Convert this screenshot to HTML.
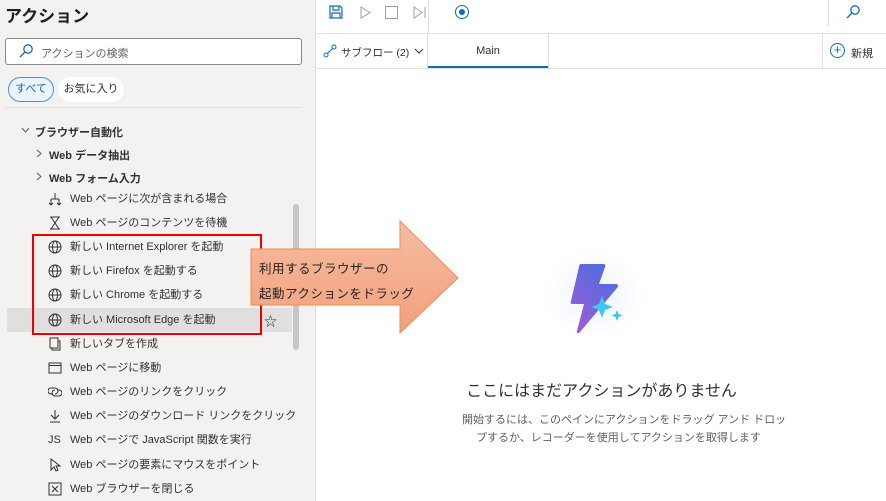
<!DOCTYPE html>
<html><head><meta charset="utf-8"><style>
*{margin:0;padding:0;box-sizing:border-box}
body{width:886px;height:501px;overflow:hidden;background:#fff;font-family:"Liberation Sans","Noto Sans CJK JP",sans-serif;color:#323130;position:relative}
.left{position:absolute;left:0;top:0;width:316px;height:501px;background:#f3f2f1;border-right:1px solid #e1dfdd}
.abs{position:absolute}
.item{position:absolute;left:48px;font-size:11px;height:20px;line-height:20px;white-space:nowrap;color:#323130}
.item .ic{position:absolute;left:0;top:3px;width:14px;height:14px}
.item span{position:absolute;left:22px}
</style></head><body>
<div class="left">
<div class="abs" style="left:5px;top:2px;font-size:17px;font-weight:bold;color:#201f1e">アクション</div>
<div class="abs" style="left:5px;top:38px;width:297px;height:27px;background:#fff;border:1px solid #8a8886;border-radius:3px"></div>
<svg class="abs" style="left:18px;top:43px" width="16" height="16" viewBox="0 0 16 16"><circle cx="10" cy="6" r="4.2" fill="none" stroke="#0f6cbd" stroke-width="1.3"/><path d="M7 9L2 14" stroke="#0f6cbd" stroke-width="1.3"/></svg>
<div class="abs" style="left:41px;top:45px;font-size:11px;color:#605e5c">アクションの検索</div>
<div class="abs" style="left:8px;top:77px;width:46px;height:25px;border:1px solid #4f8ee0;background:#ebf3fc;border-radius:13px;font-size:11px;color:#0f6cbd;text-align:center;line-height:23px">すべて</div>
<div class="abs" style="left:58px;top:77px;width:66px;height:25px;background:#fff;border-radius:13px;font-size:11px;text-align:center;line-height:25px">お気に入り</div>
<div class="abs" style="left:5px;top:107px;width:297px;height:1px;background:#e1dfdd"></div>
<svg class="abs" style="left:21px;top:127px" width="9" height="6" viewBox="0 0 9 6"><path d="M1 1l3.5 4L8 1" stroke="#605e5c" fill="none"/></svg>
<div class="abs" style="left:35px;top:124px;font-size:11px;font-weight:bold">ブラウザー自動化</div>
<svg class="abs" style="left:36px;top:149px" width="6" height="9" viewBox="0 0 6 9"><path d="M1 1l4 3.5L1 8" stroke="#605e5c" fill="none"/></svg>
<div class="abs" style="left:49px;top:147px;font-size:11px;font-weight:bold">Web データ抽出</div>
<svg class="abs" style="left:36px;top:172px" width="6" height="9" viewBox="0 0 6 9"><path d="M1 1l4 3.5L1 8" stroke="#605e5c" fill="none"/></svg>
<div class="abs" style="left:49px;top:170px;font-size:11px;font-weight:bold">Web フォーム入力</div>
<div class="abs" style="left:293px;top:204px;width:6px;height:146px;background:#c8c6c4;border-radius:3px"></div>
<div class="abs" style="left:7px;top:308px;width:285px;height:24px;background:#e1dfdd"></div>
<div class="abs" style="left:264px;top:311px;font-size:13px">☆</div>

<div class="item" style="top:189px"><svg class="ic" viewBox="0 0 14 14"><path d="M7 1v6M3 7h8M3 7v6M11 7v6M1 11l2 2 2-2M9 11l2 2 2-2" stroke="#323130" fill="none"/></svg><span>Web ページに次が含まれる場合</span></div>
<div class="item" style="top:213px"><svg class="ic" viewBox="0 0 14 14"><path d="M2 1h10M2 13h10M3 1l8 12M11 1L3 13" stroke="#323130" fill="none"/></svg><span>Web ページのコンテンツを待機</span></div>
<div class="item" style="top:237px"><svg class="ic" viewBox="0 0 14 14"><g stroke="#323130" fill="none"><circle cx="7" cy="7" r="6"/><ellipse cx="7" cy="7" rx="2.5" ry="6"/><path d="M1 7h12"/></g></svg><span>新しい Internet Explorer を起動</span></div>
<div class="item" style="top:261px"><svg class="ic" viewBox="0 0 14 14"><g stroke="#323130" fill="none"><circle cx="7" cy="7" r="6"/><ellipse cx="7" cy="7" rx="2.5" ry="6"/><path d="M1 7h12"/></g></svg><span>新しい Firefox を起動する</span></div>
<div class="item" style="top:285px"><svg class="ic" viewBox="0 0 14 14"><g stroke="#323130" fill="none"><circle cx="7" cy="7" r="6"/><ellipse cx="7" cy="7" rx="2.5" ry="6"/><path d="M1 7h12"/></g></svg><span>新しい Chrome を起動する</span></div>
<div class="item" style="top:310px"><svg class="ic" viewBox="0 0 14 14"><g stroke="#323130" fill="none"><circle cx="7" cy="7" r="6"/><ellipse cx="7" cy="7" rx="2.5" ry="6"/><path d="M1 7h12"/></g></svg><span>新しい Microsoft Edge を起動</span></div>
<div class="item" style="top:334px"><svg class="ic" viewBox="0 0 14 14"><path d="M2 1h8v10H2zM10 4h2v9H4v-2" stroke="#323130" fill="none"/></svg><span>新しいタブを作成</span></div>
<div class="item" style="top:358px"><svg class="ic" viewBox="0 0 14 14"><path d="M1 2h12v10H1zM1 4.5h12" stroke="#323130" fill="none"/></svg><span>Web ページに移動</span></div>
<div class="item" style="top:382px"><svg class="ic" viewBox="0 0 14 14"><path d="M5 9H3a3 3 0 010-6h4a3 3 0 010 6M9 5h2a3 3 0 010 6H7a3 3 0 010-6" stroke="#323130" fill="none"/></svg><span>Web ページのリンクをクリック</span></div>
<div class="item" style="top:406px"><svg class="ic" viewBox="0 0 14 14"><path d="M7 1v9M3 6l4 4 4-4M2 13h10" stroke="#323130" fill="none"/></svg><span>Web ページのダウンロード リンクをクリック</span></div>
<div class="item" style="top:430px"><span style="left:0">JS</span><span>Web ページで JavaScript 関数を実行</span></div>
<div class="item" style="top:455px"><svg class="ic" viewBox="0 0 14 14"><path d="M3 1v11l3-3 2 4 2-1-2-4h4z" stroke="#323130" fill="none"/></svg><span>Web ページの要素にマウスをポイント</span></div>
<div class="item" style="top:479px"><svg class="ic" viewBox="0 0 14 14"><path d="M1 1h12v12H1zM4 4l6 6M10 4l-6 6" stroke="#323130" fill="none"/></svg><span>Web ブラウザーを閉じる</span></div>
</div>
<div class="abs" style="left:32px;top:234px;width:230px;height:101px;border:2px solid #e00"></div>

<!-- toolbar -->
<svg class="abs" style="left:329px;top:5px" width="14" height="14" viewBox="0 0 14 14"><path d="M1 1h10l2 2v10H1zM4 1v4h6V1M3 13V8h8v5" stroke="#0f6cbd" fill="none" stroke-width="1.2"/></svg>
<svg class="abs" style="left:359px;top:6px" width="12" height="13" viewBox="0 0 12 13"><path d="M2 1l9 5.5L2 12z" stroke="#a19f9d" fill="none"/></svg>
<div class="abs" style="left:385px;top:6px;width:13px;height:13px;border:1px solid #a19f9d"></div>
<svg class="abs" style="left:413px;top:6px" width="14" height="13" viewBox="0 0 14 13"><path d="M1 1l8 5.5L1 12zM12 1v11" stroke="#a19f9d" fill="none"/></svg>
<div class="abs" style="left:428px;top:0;width:1px;height:33px;background:#e1dfdd"></div>
<div class="abs" style="left:455px;top:5px;width:14px;height:14px;border:1.5px solid #0f6cbd;border-radius:50%"></div>
<div class="abs" style="left:459px;top:9px;width:6px;height:6px;background:#0f6cbd;border-radius:50%"></div>
<div class="abs" style="left:828px;top:0;width:1px;height:26px;background:#e1dfdd"></div>
<svg class="abs" style="left:845px;top:4px" width="16" height="16" viewBox="0 0 16 16"><circle cx="10" cy="6" r="4.2" fill="none" stroke="#0f6cbd" stroke-width="1.3"/><path d="M7 9L2 14" stroke="#0f6cbd" stroke-width="1.3"/></svg>
<div class="abs" style="left:317px;top:33px;width:569px;height:1px;background:#e1dfdd"></div>
<div class="abs" style="left:317px;top:68px;width:569px;height:1px;background:#e1dfdd"></div>
<svg class="abs" style="left:323px;top:44px" width="14" height="14" viewBox="0 0 14 14"><circle cx="3" cy="11" r="2" stroke="#0f6cbd" fill="none"/><circle cx="11" cy="3" r="2" stroke="#0f6cbd" fill="none"/><path d="M4.5 9.5l5-5" stroke="#0f6cbd"/></svg>
<div class="abs" style="left:341px;top:45px;font-size:10.5px">サブフロー (2)</div>
<svg class="abs" style="left:414px;top:48px" width="10" height="6" viewBox="0 0 10 6"><path d="M1 1l4 4 4-4" stroke="#323130" fill="none"/></svg>
<div class="abs" style="left:427px;top:34px;width:1px;height:34px;background:#e1dfdd"></div>
<div class="abs" style="left:548px;top:34px;width:1px;height:34px;background:#e1dfdd"></div>
<div class="abs" style="left:428px;top:45px;width:120px;text-align:center;font-size:11px">Main</div>
<div class="abs" style="left:428px;top:66px;width:120px;height:2px;background:#0f6cbd"></div>
<div class="abs" style="left:822px;top:34px;width:1px;height:34px;background:#e1dfdd"></div>
<div class="abs" style="left:830px;top:43px;width:15px;height:15px;border:1.3px solid #0f6cbd;border-radius:50%;color:#0f6cbd;font-size:13px;line-height:12px;text-align:center">+</div>
<div class="abs" style="left:851px;top:45px;font-size:11px">新規</div>

<!-- arrow -->
<svg class="abs" style="left:248px;top:218px" width="214" height="118" viewBox="0 0 214 118"><defs><linearGradient id="g" x1="0" y1="0" x2="0" y2="1"><stop offset="0" stop-color="#f6bca0"/><stop offset="1" stop-color="#f2a07c"/></linearGradient></defs><path d="M3 31H152V3L210 60 152 115V87H3z" fill="url(#g)" stroke="#ed8a5a" stroke-width="1"/></svg>
<div class="abs" style="left:259px;top:258px;font-size:12.5px;color:#222;letter-spacing:.5px">利用するブラウザーの</div>
<div class="abs" style="left:259px;top:283px;font-size:12.5px;color:#222;letter-spacing:.5px">起動アクションをドラッグ</div>

<!-- illustration -->
<div class="abs" style="left:545px;top:250px;width:100px;height:90px;border-radius:50%;background:radial-gradient(#eef2fb,#fff 70%)"></div>
<svg class="abs" style="left:565px;top:262px" width="60" height="75" viewBox="0 0 60 75"><defs><linearGradient id="b" x1="0.8" y1="0" x2="0.2" y2="1"><stop offset="0" stop-color="#4a6ee0"/><stop offset="1" stop-color="#a05ad8"/></linearGradient></defs><path d="M16 2h22c2 0 3 1 2 3l-6 17h17c2 0 3 2 1 4L15 70c-2 2-4 1-3-1l7-27H8c-2 0-3-1-2-3l8-34c0-2 1-3 2-3z" fill="url(#b)"/><path d="M37 34l3 8 8 3-8 3-3 8-3-8-8-3 8-3z" fill="#3cc8f0"/><path d="M52 48l1.5 4 4 1.5-4 1.5-1.5 4-1.5-4-4-1.5 4-1.5z" fill="#3cc8f0"/></svg>
<div class="abs" style="left:317px;top:377px;width:569px;text-align:center;font-size:16px;color:#323130">ここにはまだアクションがありません</div>
<div class="abs" style="left:462px;top:411px;font-size:11px;color:#605e5c">開始するには、このペインにアクションをドラッグ アンド ドロッ</div>
<div class="abs" style="left:476px;top:429px;font-size:11px;color:#605e5c">プするか、レコーダーを使用してアクションを取得します</div>
</body></html>
